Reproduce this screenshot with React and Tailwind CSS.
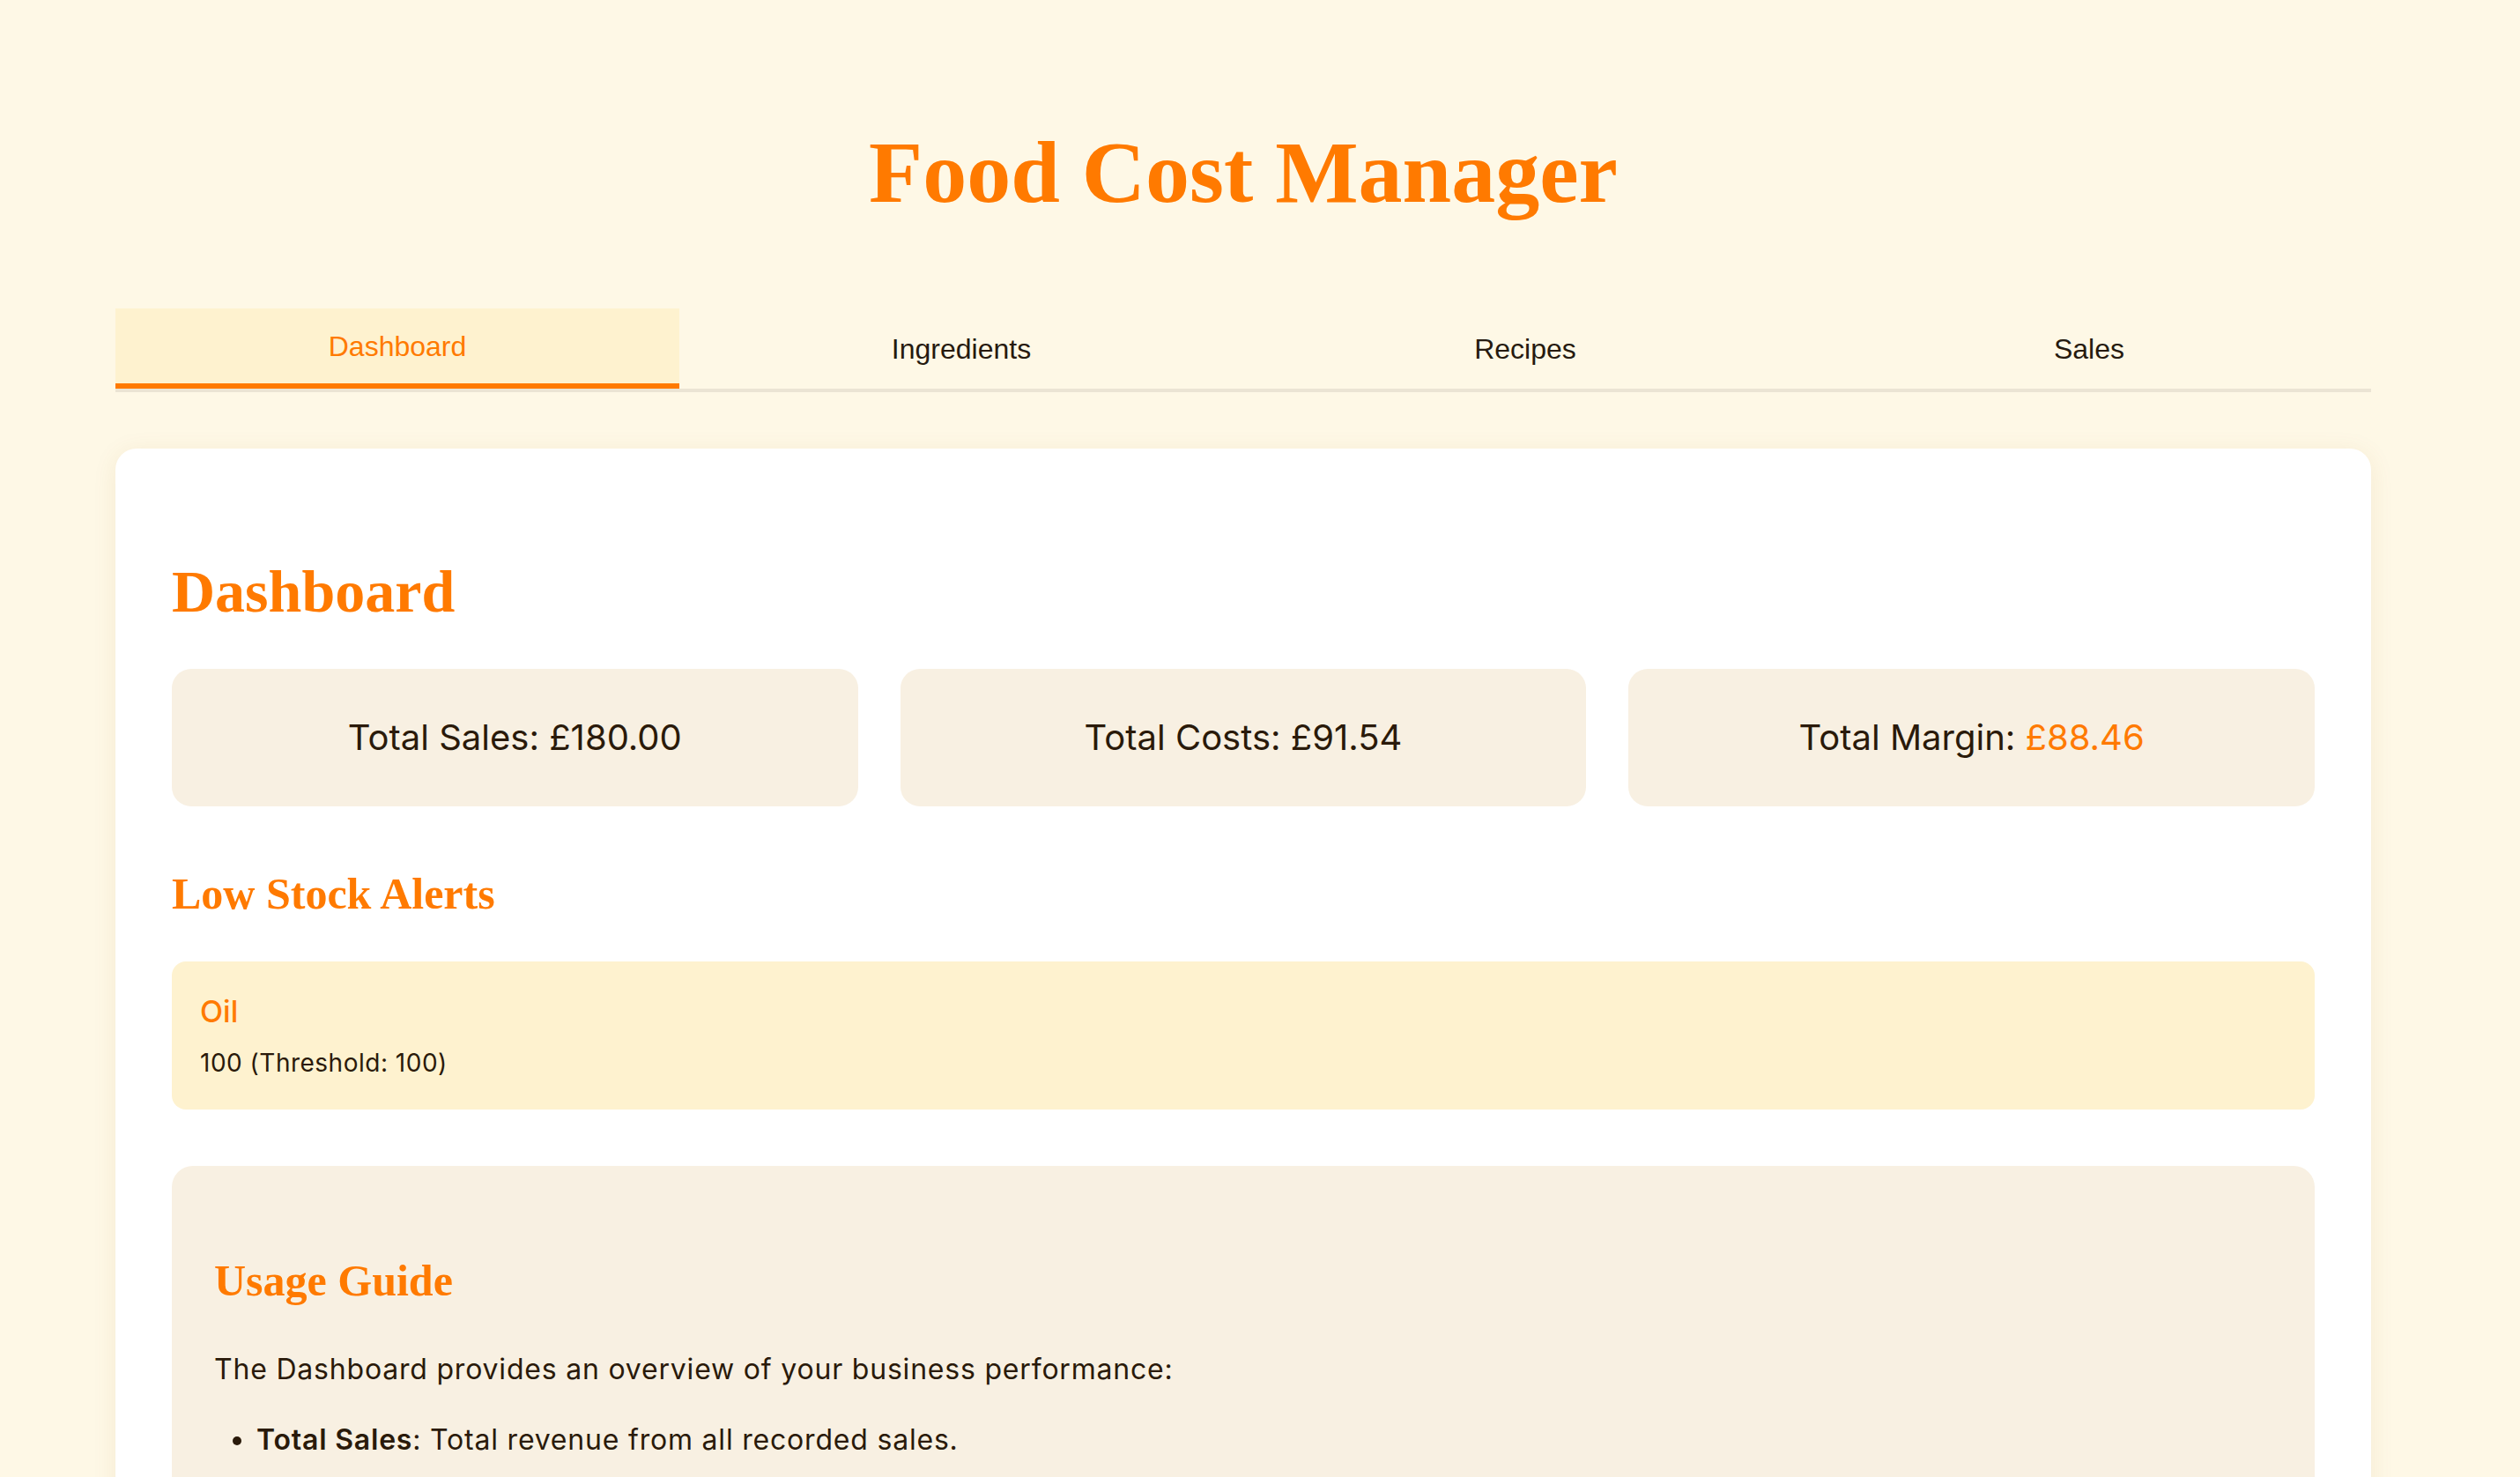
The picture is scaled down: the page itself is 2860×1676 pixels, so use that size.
const tabs = ['Dashboard', 'Ingredients', 'Recipes', 'Sales']

const stats = [
  { label: 'Total Sales', value: '£180.00' },
  { label: 'Total Costs', value: '£91.54' },
  { label: 'Total Margin', value: '£88.46', accent: true },
]

const alerts = [{ name: 'Oil', qty: 100, threshold: 100 }]

const guide = [{ term: 'Total Sales', text: 'Total revenue from all recorded sales.' }]

const serif = "font-['Liberation_Serif',serif] font-bold text-[#ff7a00]"

export default function App() {
  return (
    <div className="h-[1676px] overflow-hidden bg-[#fef8e6] font-['Inter',sans-serif] text-[#2a1a0a]">
      <div className="ml-[131px] w-[2560px]">
        <h1 className={`${serif} pt-[146px] text-center text-[100px] leading-[100px]`}>
          Food Cost Manager
        </h1>

        <nav className="mt-[104px] flex border-b-4 border-[#ebe4d4] font-['Liberation_Sans',sans-serif] text-[32px]">
          {tabs.map((tab, i) => (
            <button
              key={tab}
              className={`flex h-[91px] flex-1 items-center justify-center ${
                i === 0
                  ? 'border-b-[6px] border-[#ff7a00] bg-[#fef2cf] text-[#ff7a00]'
                  : 'text-[#261a0f]'
              }`}
            >
              {tab}
            </button>
          ))}
        </nav>

        <main className="mt-[64px] rounded-[24px] bg-white p-[64px] shadow-[0_4px_28px_rgba(150,100,20,0.09)]">
          <h2 className={`${serif} mt-[64px] text-[68px] leading-none`}>Dashboard</h2>

          <div className="mt-[54px] grid grid-cols-3 gap-[48px]">
            {stats.map((s) => (
              <div
                key={s.label}
                className="flex h-[156px] items-center justify-center rounded-[22px] bg-[#f8f0e2] text-[40px]"
              >
                <span>
                  {s.label}:{' '}
                  <span className={s.accent ? 'text-[#ff7a00]' : ''}>{s.value}</span>
                </span>
              </div>
            ))}
          </div>

          <h3 className={`${serif} mt-[74px] text-[50px] leading-none`}>Low Stock Alerts</h3>

          <div className="mt-[52px] flex flex-col gap-4">
            {alerts.map((a) => (
              <div key={a.name} className="rounded-[16px] bg-[#fef2cf] p-[32px]">
                <div className="text-[34px] leading-[50px] font-medium text-[#ff7a00]">{a.name}</div>
                <div className="mt-[12px] text-[28px] leading-[42px] tracking-[0.5px]">
                  {a.qty} (Threshold: {a.threshold})
                </div>
              </div>
            ))}
          </div>

          <section className="mt-[64px] rounded-[24px] bg-[#f8f0e2] p-[48px]">
            <h3 className={`${serif} mt-[57px] text-[50px] leading-none`}>Usage Guide</h3>
            <p className="mt-[52px] text-[32px] leading-[48px] tracking-[0.8px]">
              The Dashboard provides an overview of your business performance:
            </p>
            <ul className="mt-[32px] list-disc pl-[48px] text-[32px] leading-[48px] tracking-[0.8px]">
              {guide.map((g) => (
                <li key={g.term}>
                  <strong className="font-semibold">{g.term}</strong>: {g.text}
                </li>
              ))}
            </ul>
          </section>
        </main>
      </div>
    </div>
  )
}
